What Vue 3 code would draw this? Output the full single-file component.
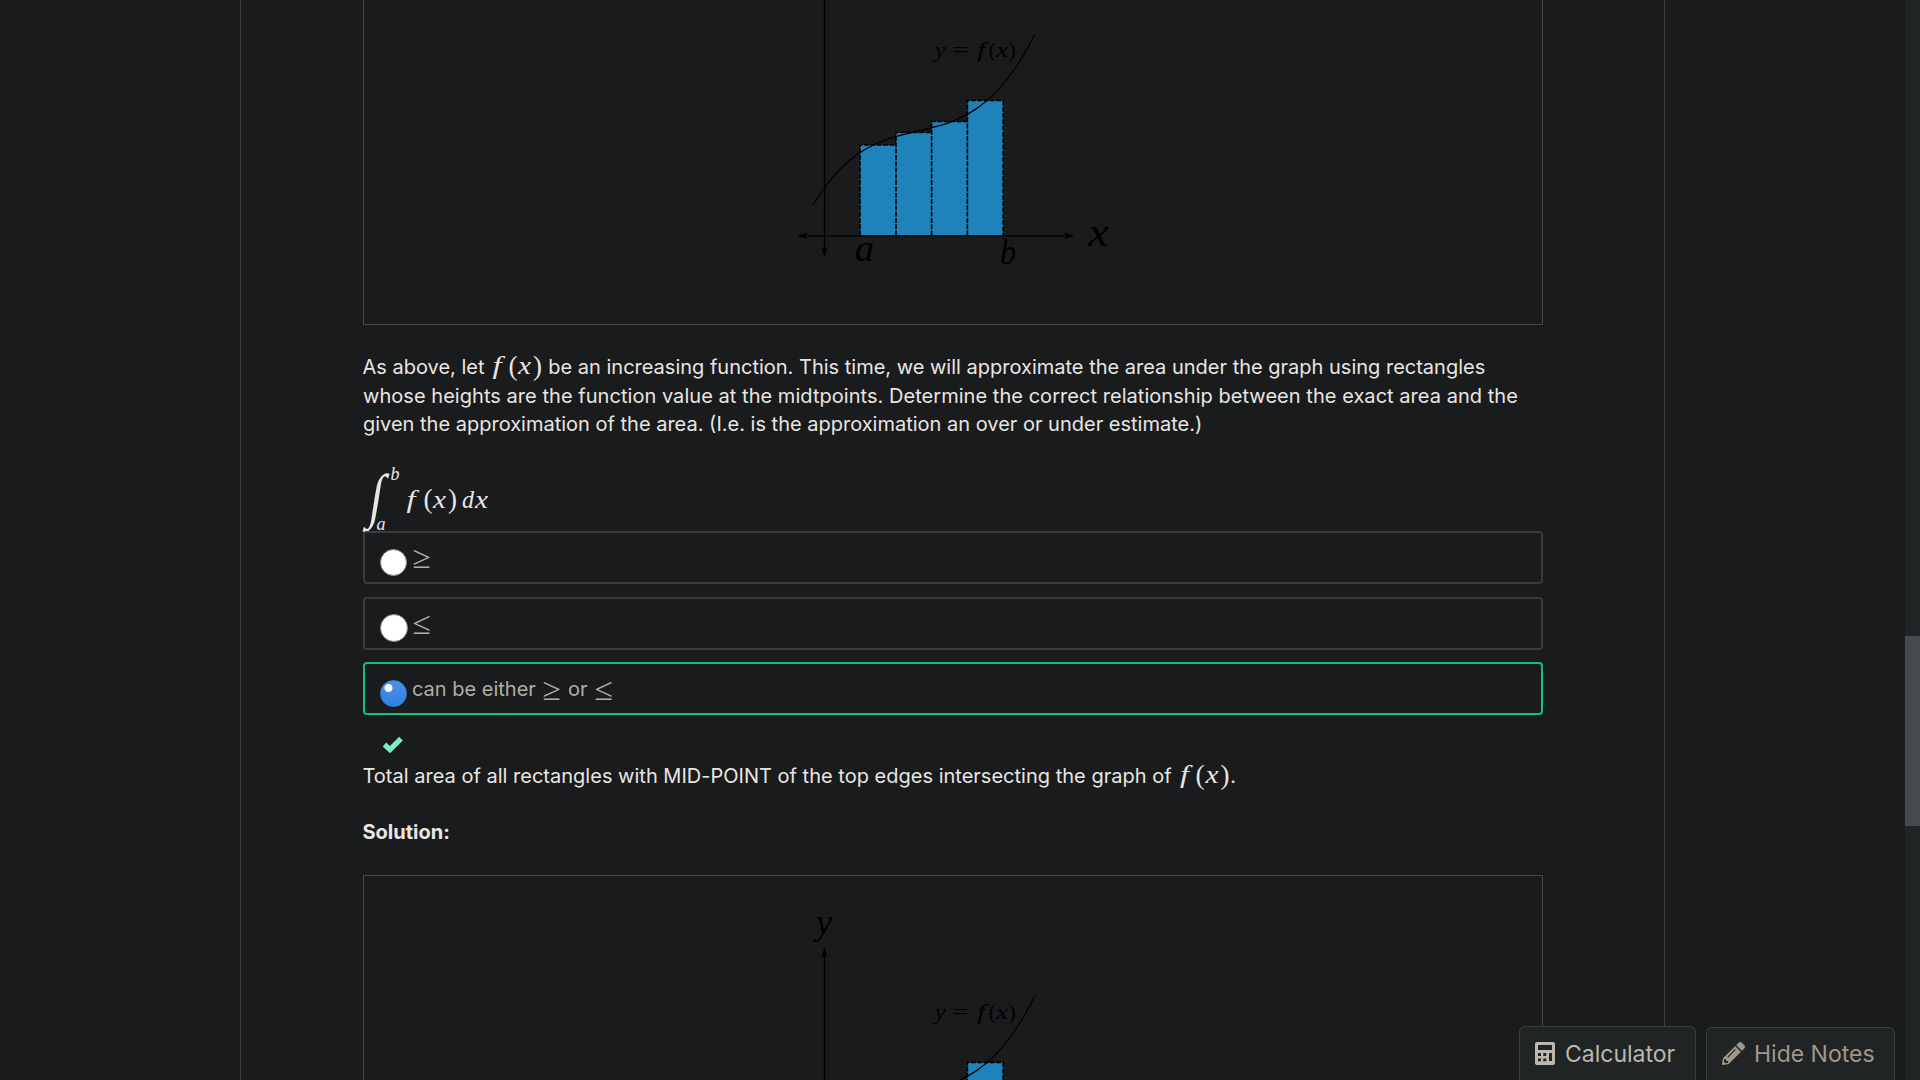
<script setup>
const figures = ['upper', 'lower']
const bars = [
  { x: 860, top: 145 },
  { x: 896, top: 132.5 },
  { x: 931.6, top: 121.5 },
  { x: 967.4, top: 100.4 },
]
const options = [
  { parts: ['≥'], checked: false },
  { parts: ['≤'], checked: false },
  { parts: ['can be either', '≥', 'or', '≤'], checked: true },
]
const isSign = (part) => part === '≥' || part === '≤'
</script>

<template>
  <div class="screen">
    <main class="page">
      <article class="column">
        <template v-for="(name, index) in figures" :key="name">
          <figure class="figure">
            <svg width="1178" height="410" viewBox="364 -86 1178 410">
              <g fill="#1f82bb">
                <rect v-for="bar in bars" :key="bar.x" :x="bar.x" :y="bar.top" width="36" :height="235.5 - bar.top" />
              </g>
              <g fill="none" stroke="#000" stroke-width="1.6" stroke-dasharray="5 1.3">
                <path v-for="bar in bars" :key="bar.x" :d="`M${bar.x} 235.5V${bar.top}H${bar.x + 35.8}`" />
                <path d="M1003.2 100.4V235.5" />
              </g>
              <path d="M813 205C886.9 82.2 960.8 183.7 1034.7 34.3" fill="none" stroke="#000" stroke-width="1.3" />
              <g stroke="#000" stroke-width="1.3">
                <path d="M824.5 -10V253M801 235.8H1070" />
              </g>
              <g fill="#000">
                <path d="M824.5 -14.5L827.8 -4.5L824.5 -7L821.2 -4.5Z" />
                <path d="M824.5 257.3L827.8 247L824.5 249.5L821.2 247Z" />
                <path d="M797.3 235.8L807.6 232.5L805 235.8L807.6 239.1Z" />
                <path d="M1074.3 235.8L1064 232.5L1066.5 235.8L1064 239.1Z" />
              </g>
              <g class="glyphs" fill="#000">
                <text v-if="index > 0" x="816" y="-28" font-size="35" textLength="16" lengthAdjust="spacingAndGlyphs">y</text>
                <g v-if="index === 0">
                  <text x="855" y="261" font-size="37" textLength="19" lengthAdjust="spacingAndGlyphs">a</text>
                  <text x="1000" y="263.5" font-size="36" textLength="16" lengthAdjust="spacingAndGlyphs">b</text>
                  <text x="1088" y="245.5" font-size="40" textLength="21" lengthAdjust="spacingAndGlyphs">x</text>
                </g>
                <text x="935" y="57" font-size="22" textLength="10.5" lengthAdjust="spacingAndGlyphs">y</text>
                <text class="upright" x="952" y="57" font-size="22" textLength="16.5" lengthAdjust="spacingAndGlyphs">=</text>
                <text x="977" y="57" font-size="22" textLength="8.5" lengthAdjust="spacingAndGlyphs">f</text>
                <text class="upright" x="988.5" y="57" font-size="22">(</text>
                <text x="996" y="57" font-size="22" textLength="12" lengthAdjust="spacingAndGlyphs">x</text>
                <text class="upright" x="1008.5" y="57" font-size="22">)</text>
              </g>
            </svg>
          </figure>

          <template v-if="index === 0">
            <p class="question">
              As above, let
              <svg class="fx" width="52.5" height="28" viewBox="0 0 52.5 28"><text x="2.5" y="20" textLength="9" lengthAdjust="spacingAndGlyphs">f</text><text class="upright paren" x="18.5" y="20.5">(</text><text x="28" y="20" textLength="13" lengthAdjust="spacingAndGlyphs">x</text><text class="upright paren" x="43" y="20.5">)</text></svg>
              be an increasing function. This time, we will approximate the area under the graph using rectangles<br />
              <span class="spaced">whose heights are the function value at the midtpoints. Determine the correct relationship between the exact area and the</span><br />
              given the approximation of the area. (I.e. is the approximation an over or under estimate.)
            </p>

            <svg class="integral" width="140" height="71" viewBox="363 460 140 71">
              <text class="upright" transform="translate(367.5 516) skewX(-9)" font-size="60" textLength="13" lengthAdjust="spacingAndGlyphs">∫</text>
              <text x="390.5" y="480" font-size="18">b</text>
              <text x="376.5" y="530" font-size="18">a</text>
              <text x="406.5" y="507.5" textLength="9" lengthAdjust="spacingAndGlyphs">f</text>
              <text class="upright paren" x="423.5" y="508">(</text>
              <text x="433" y="507.5" textLength="13" lengthAdjust="spacingAndGlyphs">x</text>
              <text class="upright paren" x="448" y="508">)</text>
              <text x="462" y="507.5" textLength="12" lengthAdjust="spacingAndGlyphs">d</text>
              <text x="475" y="507.5" textLength="13" lengthAdjust="spacingAndGlyphs">x</text>
            </svg>

            <div class="options">
              <label v-for="option in options" :key="option.parts.join()" class="option" :class="{ correct: option.checked }">
                <span class="radio" :class="{ checked: option.checked }"></span>
                <template v-for="part in option.parts" :key="part">
                  <svg v-if="isSign(part)" class="sign" width="18" height="26" viewBox="0 0 18 26"><text x="0.5" y="22.500" font-size="32" textLength="18.500" lengthAdjust="spacingAndGlyphs">{{ part }}</text></svg>
                  <span v-else class="word">{{ part }}</span>
                </template>
              </label>
            </div>

            <svg class="tick" width="22" height="17" viewBox="0 0 22 17"><path d="M2.5 8.5L8 13.6L19 2.6" fill="none" stroke="#7aefc1" stroke-width="5.2" /></svg>

            <p class="statement">
              Total area of all rectangles with MID-POINT of the top edges intersecting the graph of
              <svg class="fx" width="53" height="28" viewBox="0 0 53 28"><text x="3" y="20" textLength="9" lengthAdjust="spacingAndGlyphs">f</text><text class="upright paren" x="18.5" y="20.5">(</text><text x="28.5" y="20" textLength="13" lengthAdjust="spacingAndGlyphs">x</text><text class="upright paren" x="43.5" y="20.5">)</text></svg>.
            </p>
            <p class="solution">Solution:</p>
          </template>
        </template>
      </article>

      <div class="tools">
        <button class="tool calculator">
          <svg width="20" height="23" viewBox="0 0 20 23"><path fill="currentColor" fill-rule="evenodd" d="M2 0H18Q20 0 20 2V21Q20 23 18 23H2Q0 23 0 21V2Q0 0 2 0ZM3 3V8H17V3ZM3 11V14H6V11ZM8.3 11V14H11.3V11ZM14 11V19H17V11ZM3 16.5V19.3H6V16.5ZM8.3 16.5V19.3H11.3V16.5Z" /></svg>
          <span>Calculator</span>
        </button>
        <button class="tool notes">
          <svg width="23" height="23" viewBox="0 0 512 512"><path fill="currentColor" d="M497.9 142.1l-46.1 46.1c-4.7 4.7-12.3 4.7-17 0l-111-111c-4.7-4.7-4.7-12.3 0-17l46.1-46.1c18.7-18.7 49.1-18.7 67.9 0l60.1 60.1c18.8 18.7 18.8 49.1 0 67.9zM284.2 99.8L21.6 362.4.4 483.9c-2.9 16.4 11.4 30.6 27.8 27.8l121.5-21.3 262.6-262.6c4.7-4.7 4.7-12.3 0-17l-111-111c-4.8-4.7-12.4-4.7-17.1 0zM124.1 339.9c-5.5-5.5-5.5-14.3 0-19.8l154-154c5.5-5.5 14.3-5.5 19.8 0s5.5 14.3 0 19.8l-154 154c-5.5 5.5-14.3 5.5-19.8 0zM88 424h48v36.3l-64.5 11.3-31.1-31.1L51.7 376H88v48z" /></svg>
          <span>Hide Notes</span>
        </button>
      </div>
    </main>
    <div class="scrollbar"><div class="thumb"></div></div>
  </div>
</template>

<style>
body {
  background: #1a1b1d;
  overflow: hidden;
}
</style>

<style scoped>
.screen {
  display: flex;
  width: 1920px;
  height: 1080px;
  overflow: hidden;
  background: #1a1b1d;
  color: #e8e6e3;
  font-family: Inter, "Noto Sans", sans-serif;
  font-size: 20px;
  line-height: 28.6px;
}
.page {
  position: relative;
  flex: 1;
  height: 1080px;
  overflow: hidden;
}
.column {
  display: flow-root;
  box-sizing: border-box;
  width: 1425px;
  height: 1080px;
  margin-left: 240px;
  padding-left: 122px;
  border-left: 1px solid #3b3f41;
  border-right: 1px solid #3b3f41;
}
.figure {
  box-sizing: border-box;
  width: 1180px;
  height: 412px;
  margin: 0;
  border: 1px solid #45494b;
}
.figure:first-child {
  margin-top: -87px;
}
.figure svg,
.integral {
  display: block;
}
.glyphs,
.fx,
.integral,
.sign {
  font-family: "Liberation Serif", serif;
  font-style: italic;
}
.upright,
.sign {
  font-style: normal;
}
p {
  margin: 0;
  white-space: nowrap;
  text-indent: -0.5px;
}
.question {
  height: 86px;
  padding-top: 28px;
  margin-bottom: 21px;
}
.spaced {
  letter-spacing: 0.042px;
}
.fx,
.integral {
  overflow: visible;
  fill: currentColor;
  font-size: 25px;
  text-indent: 0;
}
.paren {
  font-size: 27px;
}
.fx {
  height: 28px;
  vertical-align: -4px;
  margin: -4px 0;
}
.options {
  display: flex;
  flex-direction: column;
  gap: 12px;
  color: #b2ada4;
}
.option {
  box-sizing: border-box;
  display: flex;
  align-items: center;
  width: 1180px;
  height: 53px;
  padding: 0 0 0 15px;
  border: 2px solid #3a3b3d;
  border-radius: 4px;
}
.option:first-child {
  margin-bottom: 1px;
}
.option.correct {
  border-color: #16bf78;
}
.radio {
  box-sizing: border-box;
  width: 27px;
  height: 27px;
  margin: 9px 5px 0 0;
  border: 1px solid #8c857b;
  border-radius: 50%;
  background: #fff;
}
.option:nth-child(2) .radio {
  width: 28px;
  height: 28px;
  margin-right: 4px;
}
.radio.checked {
  margin-top: 10px;
  border-color: #3683dc;
  background: radial-gradient(circle at 7.5px 7px, #fff 3.6px, transparent 4.4px), linear-gradient(#4f92e4, #2f7fe0);
}
.sign {
  overflow: visible;
  fill: currentColor;
}
.word {
  margin-top: 1px;
}
.word + .sign {
  margin: 2px 0 0 6.5px;
}
.sign + .word {
  margin-left: 7.5px;
}
.sign + .word + .sign {
  margin-left: 7px;
}
.tick {
  display: block;
  margin: 21px 0 0 19px;
}
.statement {
  margin-top: 9px;
  letter-spacing: 0.01px;
}
.solution {
  margin-top: 27.4px;
  margin-bottom: 28.8px;
  font-weight: 700;
}
.tools {
  position: absolute;
  right: 10px;
  bottom: 0;
  display: flex;
  align-items: flex-end;
  gap: 10px;
}
.tool {
  box-sizing: border-box;
  display: flex;
  align-items: center;
  gap: 10px;
  height: 54px;
  padding: 0 0 0 15px;
  border: 1px solid #3b3f41;
  border-bottom: 0;
  border-radius: 6px 6px 0 0;
  background: #202425;
  color: #bdb7ae;
  font: 23px Inter, sans-serif;
  white-space: nowrap;
}
.calculator {
  width: 177px;
}
.notes {
  width: 189px;
  height: 53px;
  gap: 9px;
  padding-bottom: 1px;
  color: #a0978a;
}
.scrollbar {
  width: 15px;
  background: #202425;
}
.thumb {
  height: 190px;
  margin-top: 636px;
  background: #454a4d;
}
</style>
